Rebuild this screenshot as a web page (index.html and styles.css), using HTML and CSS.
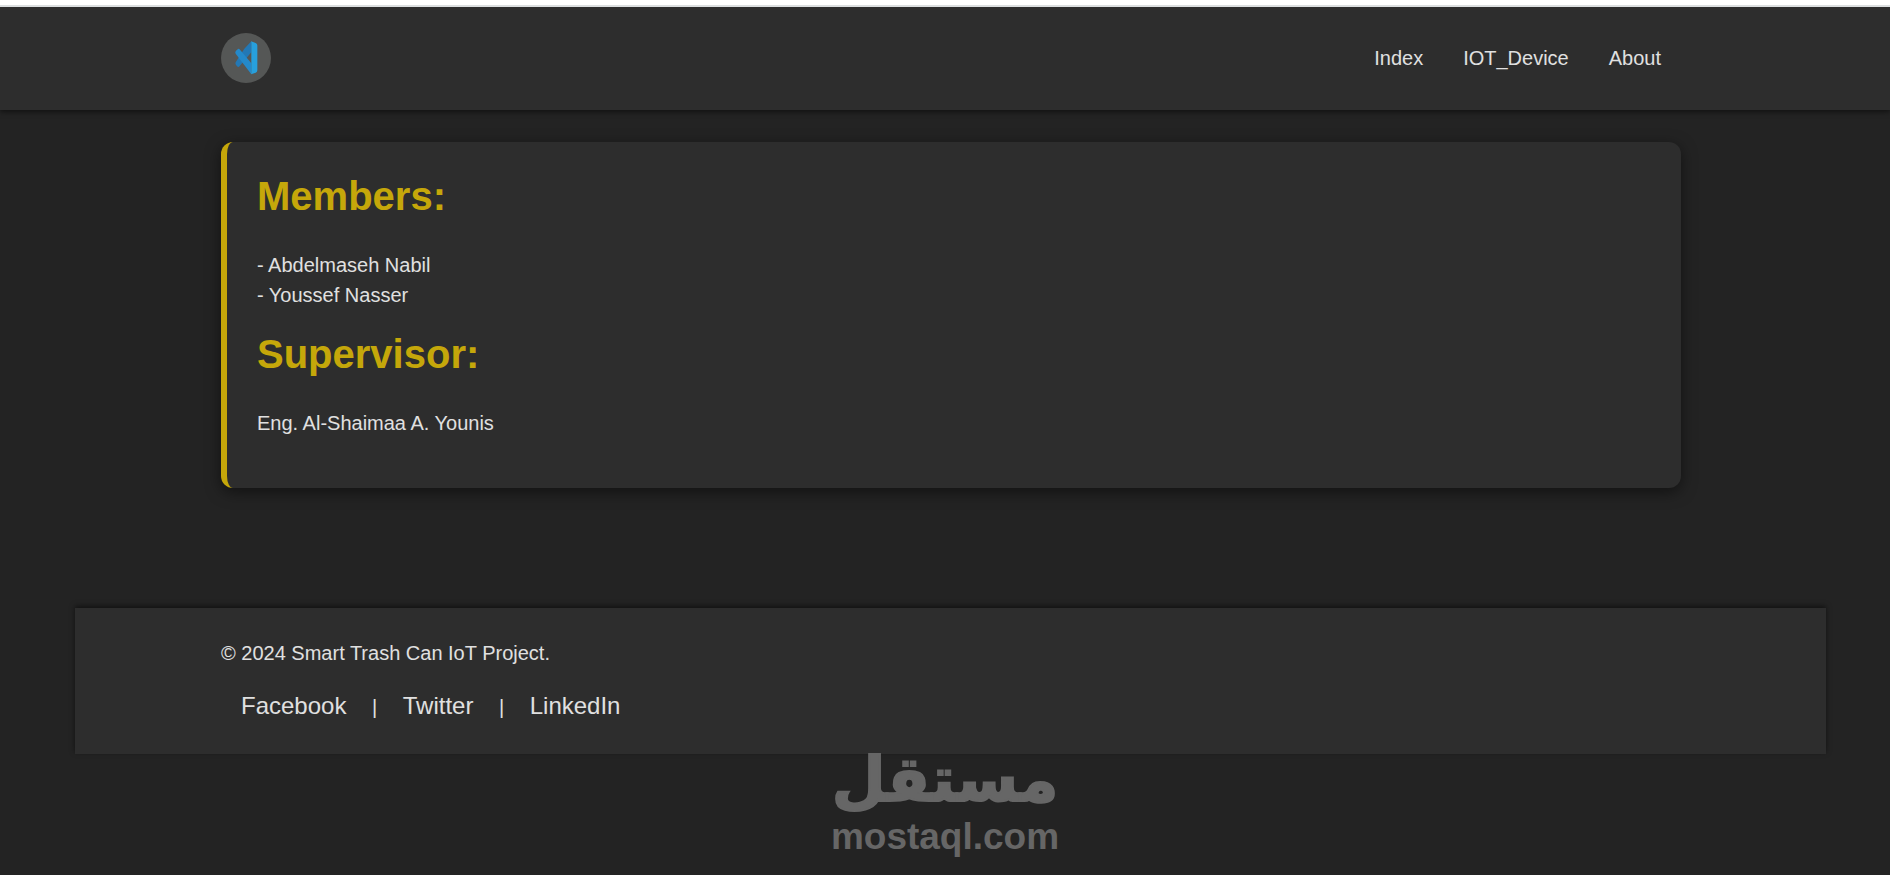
FILE: index.html
```html
<!DOCTYPE html>
<html lang="en">
<head>
<meta charset="UTF-8">
<meta name="viewport" content="width=device-width, initial-scale=1.0">
<title>Smart Trash Can IoT Project</title>
<link rel="stylesheet" href="styles.css">
</head>
<body>

<!-- Header -->
<header class="header">
  <a href="#" class="logo" aria-label="Home">
    <svg viewBox="0 0 150 150" width="50" height="50">
      <circle cx="75" cy="75" r="75" fill="#555756"/>
      <path d="M91 25L70 47L44 88Q42 92 45 96L50 101Q53 103 56 99L91 58Z" fill="#2378b5"/>
      <path d="M91 124L44 62Q41 57 45 53L51 48Q54 46 57 50L91 91Z" fill="#2489ca"/>
      <path d="M90 25L104 30Q109 32 109 37V112Q109 117 104 119L90 124Q91 122 91 118V31Q91 27 90 25Z" fill="#27a0dd"/>
    </svg>
  </a>
  <nav class="nav">
    <a href="#">Index</a>
    <a href="#">IOT_Device</a>
    <a href="#">About</a>
  </nav>
</header>

<!-- Team -->
<main class="content">
  <section class="card">
    <h1>Members:</h1>
    <p>- Abdelmaseh Nabil<br>- Youssef Nasser</p>
    <h1>Supervisor:</h1>
    <p>Eng. Al-Shaimaa A. Younis</p>
  </section>
</main>

<!-- Footer -->
<footer class="footer">
  <p>© 2024 Smart Trash Can IoT Project.</p>
  <div class="social">
    <a href="#">Facebook</a> | <a href="#">Twitter</a> | <a href="#">LinkedIn</a>
  </div>
</footer>

<!-- Watermark -->
<div class="watermark">
  <span class="watermark-ar" lang="ar" dir="rtl">مستقل</span>
  <span class="watermark-en">mostaql.com</span>
</div>

</body>
</html>
```
FILE: styles.css
```css
*{margin:0;padding:0;box-sizing:border-box}

body{
  position:relative;
  min-height:100vh;
  border-top:5px solid #fff;
  background:#232323;
  color:#e0e0e0;
  font-family:"Liberation Sans",Arial,sans-serif;
  font-size:20px;
  line-height:30px;
}
a{color:inherit;text-decoration:none}

/* Header */
.header{
  display:flex;justify-content:space-between;align-items:center;
  padding:26px 209px 27px 221px;
  border-top:2px solid #dcdfe0;
  background:#2d2d2d;
  box-shadow:0 2px 5px rgba(0,0,0,.5);
}
.logo{display:block;height:50px}
.nav{display:flex}
.nav a{padding:0 20px}
.nav a:hover,.social a:hover{color:#c5a70a}

/* Team card */
.content{padding:32px 209px 120px 221px}
.card{
  padding:24px 30px 36px;
  border-left:6px solid #c5a70a;
  border-radius:12px;
  background:#2d2d2d;
  box-shadow:0 4px 15px rgba(0,0,0,.5);
}
.card h1{margin-bottom:24px;color:#c5a70a;font-size:40px;line-height:60px}
.card p{margin-bottom:14px}

/* Footer */
.footer{
  margin:0 64px 0 75px;
  padding:30px 146px;
  background:#2d2d2d;
  box-shadow:0 -2px 5px rgba(0,0,0,.5);
}
.social{margin-top:20px}
.social a{padding:0 20px;font-size:24px;line-height:36px}

/* Watermark, laid over the bottom of the page */
.watermark{
  position:absolute;left:0;right:0;bottom:17px;
  display:flex;flex-direction:column;align-items:center;
  color:#666;font-weight:700;
  pointer-events:none;
}
.watermark-ar{font-family:"DejaVu Sans",sans-serif;font-size:62px;line-height:72px;-webkit-text-stroke:2px #666}
.watermark-en{font-size:37px;line-height:42px}
```
